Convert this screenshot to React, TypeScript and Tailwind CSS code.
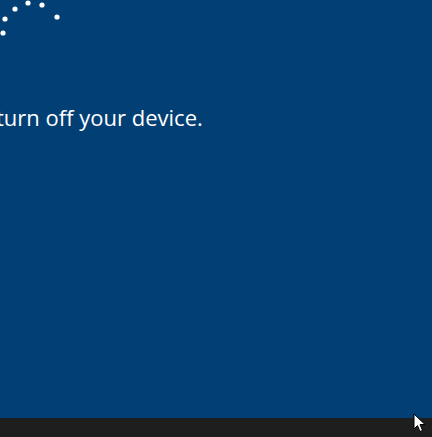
import React from "react";

const dots = [
  { cx: 3, cy: 33 },
  { cx: 5, cy: 19 },
  { cx: 15, cy: 9 },
  { cx: 28, cy: 3 },
  { cx: 42, cy: 5 },
  { cx: 57, cy: 17 },
];

const Spinner = () => (
  <svg width="70" height="45" viewBox="0 0 70 45" className="absolute left-0 top-0">
    {dots.map((d, i) => (
      <circle key={i} cx={d.cx} cy={d.cy} r="2.6" fill="#ffffff" />
    ))}
  </svg>
);

const Cursor = () => (
  <svg width="14" height="20" viewBox="0 0 14 20" className="absolute left-[413px] top-[413px]">
    <path d="M1 1 L1 16 L4.5 12.5 L7 18.5 L9.5 17.5 L7 11.5 L12 11.5 Z" fill="#ffffff" stroke="#000000" strokeWidth="1" strokeLinejoin="round" />
  </svg>
);

export default function App() {
  return (
    <div className="relative flex h-[437px] w-[432px] flex-col overflow-hidden bg-[#023f75]">
      <Spinner />
      <div className="flex-1 pt-[102px]">
        <p
          className="-ml-[4px] whitespace-nowrap text-[22px] font-normal leading-[30px] text-white"
          style={{ fontFamily: '"Open Sans", "Noto Sans", sans-serif' }}
        >
          turn off your device.
        </p>
      </div>
      <div className="h-[19px] bg-[#1e1e1e]" />
      <Cursor />
    </div>
  );
}
